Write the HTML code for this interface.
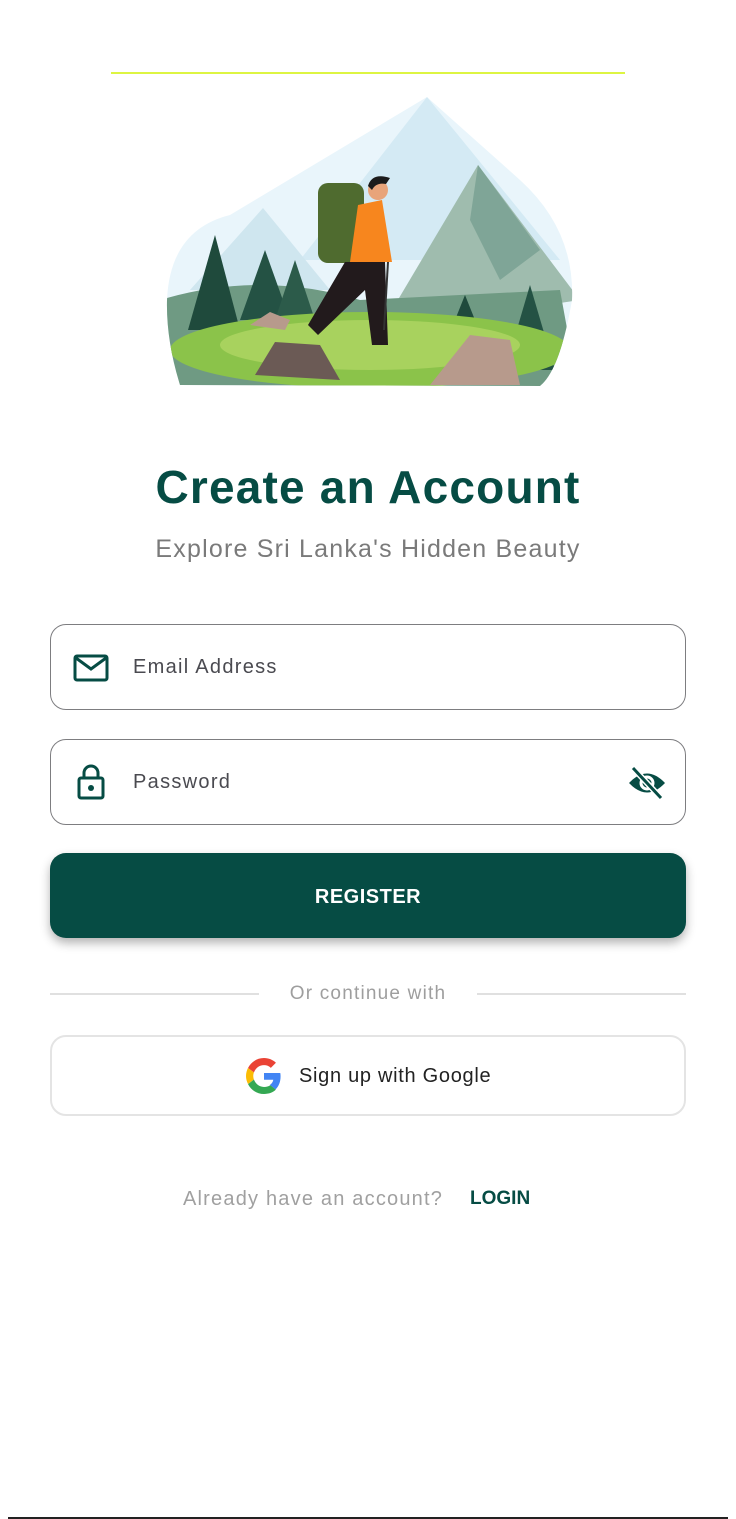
<!DOCTYPE html>
<html><head><meta charset="utf-8"><style>
*{margin:0;padding:0;box-sizing:border-box}
body{width:736px;height:1519px;background:#fff;position:relative;font-family:"Liberation Sans",sans-serif;overflow:hidden}
.abs{position:absolute}
.field{position:absolute;left:50px;width:636px;height:86px;border:1.5px solid #7d7d80;border-radius:16px}
.field span{position:absolute;left:82px;top:31px;font-size:20px;color:#4a4a50;letter-spacing:1.3px}
</style></head><body>
<div class="abs" style="left:111px;top:72px;width:514px;height:2px;background:#ddf542"></div>
<svg class="abs" style="left:0;top:0" width="736" height="400" viewBox="0 0 736 400">
<defs><clipPath id="c"><path d="M167 300 Q170 230 230 215 L427 97 L520 180 Q575 230 572 300 Q560 370 540 386 L180 385 Q166 340 167 300Z"/></clipPath></defs>
<g clip-path="url(#c)">
<rect x="150" y="90" width="440" height="300" fill="#e9f5fb"/>
<polygon points="427,97 560,260 300,260" fill="#d4eaf4"/>
<polygon points="263,208 330,290 190,290" fill="#cfe6ef"/>
<polygon points="478,165 580,300 380,330" fill="#9fbcae"/>
<polygon points="478,165 540,250 500,280 470,220" fill="#7fa597"/>
<path d="M160 300 Q260 270 360 300 L560 290 L580 400 L150 400Z" fill="#6f9a83"/>
<polygon points="215,235 240,330 188,330" fill="#1f4a3c"/>
<polygon points="265,250 290,320 240,320" fill="#245244"/>
<polygon points="295,260 315,320 275,320" fill="#2c5b4a"/>
<polygon points="465,295 485,345 445,345" fill="#1f4a3c"/>
<polygon points="530,285 555,370 505,370" fill="#245244"/>
<ellipse cx="370" cy="350" rx="200" ry="38" fill="#8bc34a"/>
<ellipse cx="370" cy="345" rx="150" ry="25" fill="#a8d25e"/>
<polygon points="255,375 275,342 320,345 340,380" fill="#6b5a55"/>
<polygon points="430,385 470,335 510,340 520,385" fill="#b79a8c"/>
<polygon points="250,325 270,312 290,320 285,330" fill="#b79a8c"/>
</g>
<rect x="318" y="183" width="46" height="80" rx="10" fill="#4f6b2f"/>
<path d="M358 205 L382 200 L392 262 L350 262Z" fill="#f7861e"/>
<path d="M345 262 L385 262 L388 345 L372 345 L365 290 L318 335 L308 325Z" fill="#221a1c"/>
<circle cx="378" cy="190" r="10" fill="#e8a47a"/>
<path d="M368 186 Q372 172 390 178 L386 184 Q376 182 372 190Z" fill="#1b1b1b"/>
<line x1="388" y1="262" x2="384" y2="330" stroke="#333" stroke-width="2"/>
</svg>
<div class="abs" style="left:0;width:736px;top:460px;text-align:center;font-size:46px;font-weight:bold;color:#064c44;letter-spacing:1.2px">Create an Account</div>
<div class="abs" style="left:0;width:736px;top:535px;text-align:center;font-size:25px;color:#7a7a7a;letter-spacing:1.2px">Explore Sri Lanka's Hidden Beauty</div>
<div class="field" style="top:624px">
<svg class="abs" style="left:22px;top:29px" width="36" height="28" viewBox="0 0 36 28"><rect x="2" y="2" width="32" height="24" rx="2" fill="none" stroke="#064c44" stroke-width="3"/><path d="M3 4 L18 15 L33 4" fill="none" stroke="#064c44" stroke-width="3"/></svg>
<span>Email Address</span></div>
<div class="field" style="top:739px">
<svg class="abs" style="left:26px;top:24px" width="28" height="36" viewBox="0 0 28 36"><path d="M7 14 V9 A7 7 0 0 1 21 9 V14" fill="none" stroke="#064c44" stroke-width="3"/><rect x="2" y="14" width="24" height="20" rx="2" fill="none" stroke="#064c44" stroke-width="3"/><circle cx="14" cy="24" r="3" fill="#064c44"/></svg>
<span>Password</span>
<svg class="abs" style="left:576px;top:26px" width="40" height="34" viewBox="0 0 40 34"><path d="M2 17 Q20 -2 38 17 Q20 36 2 17Z" fill="#064c44"/><circle cx="20" cy="17" r="6" fill="none" stroke="#fff" stroke-width="3"/><line x1="6" y1="2" x2="34" y2="32" stroke="#fff" stroke-width="6"/><line x1="6" y1="2" x2="34" y2="32" stroke="#064c44" stroke-width="3"/></svg>
</div>
<div class="abs" style="left:50px;top:853px;width:636px;height:85px;border-radius:16px;background:#064c44;box-shadow:0 5px 10px rgba(0,0,0,.3);color:#fff;font-weight:bold;font-size:20px;text-align:center;line-height:88px;letter-spacing:.5px">REGISTER</div>
<div class="abs" style="left:50px;top:993px;width:209px;height:2px;background:#e0e0e0"></div>
<div class="abs" style="left:477px;top:993px;width:209px;height:2px;background:#e0e0e0"></div>
<div class="abs" style="left:259px;width:218px;top:983px;text-align:center;font-size:19px;color:#9e9e9e;letter-spacing:1.2px">Or continue with</div>
<div class="abs" style="left:50px;top:1035px;width:636px;height:81px;border:2px solid #e4e4e4;border-radius:16px"></div>
<svg class="abs" style="left:246px;top:1058px" width="36" height="36" viewBox="0 0 48 48"><path fill="#EA4335" d="M24 9.5c3.5 0 6.6 1.2 9.1 3.6l6.8-6.8C35.8 2.4 30.3 0 24 0 14.6 0 6.6 5.4 2.7 13.3l7.9 6.1C12.5 13.6 17.8 9.5 24 9.5z"/><path fill="#4285F4" d="M46.1 24.5c0-1.6-.1-3.1-.4-4.5H24v9h12.4c-.5 2.9-2.2 5.4-4.7 7l7.6 5.9c4.4-4.1 6.8-10.1 6.8-17.4z"/><path fill="#FBBC05" d="M10.5 28.6c-.5-1.4-.8-3-.8-4.6s.3-3.2.8-4.6l-7.9-6.1C1 16.6 0 20.2 0 24s1 7.4 2.7 10.7l7.8-6.1z"/><path fill="#34A853" d="M24 48c6.5 0 11.9-2.1 15.9-5.8l-7.6-5.9c-2.1 1.4-4.9 2.3-8.3 2.3-6.2 0-11.5-4.2-13.4-9.9l-7.9 6.1C6.6 42.6 14.6 48 24 48z"/></svg>
<div class="abs" style="left:299px;top:1065px;font-size:20px;color:#222;letter-spacing:.7px">Sign up with Google</div>
<div class="abs" style="left:183px;top:1188px;font-size:20px;color:#a0a0a0;letter-spacing:1.2px">Already have an account?</div>
<div class="abs" style="left:470px;top:1188px;font-size:19px;font-weight:bold;color:#064c44">LOGIN</div>
<div class="abs" style="left:8px;top:1517px;width:720px;height:2px;background:#222"></div>
</body></html>
